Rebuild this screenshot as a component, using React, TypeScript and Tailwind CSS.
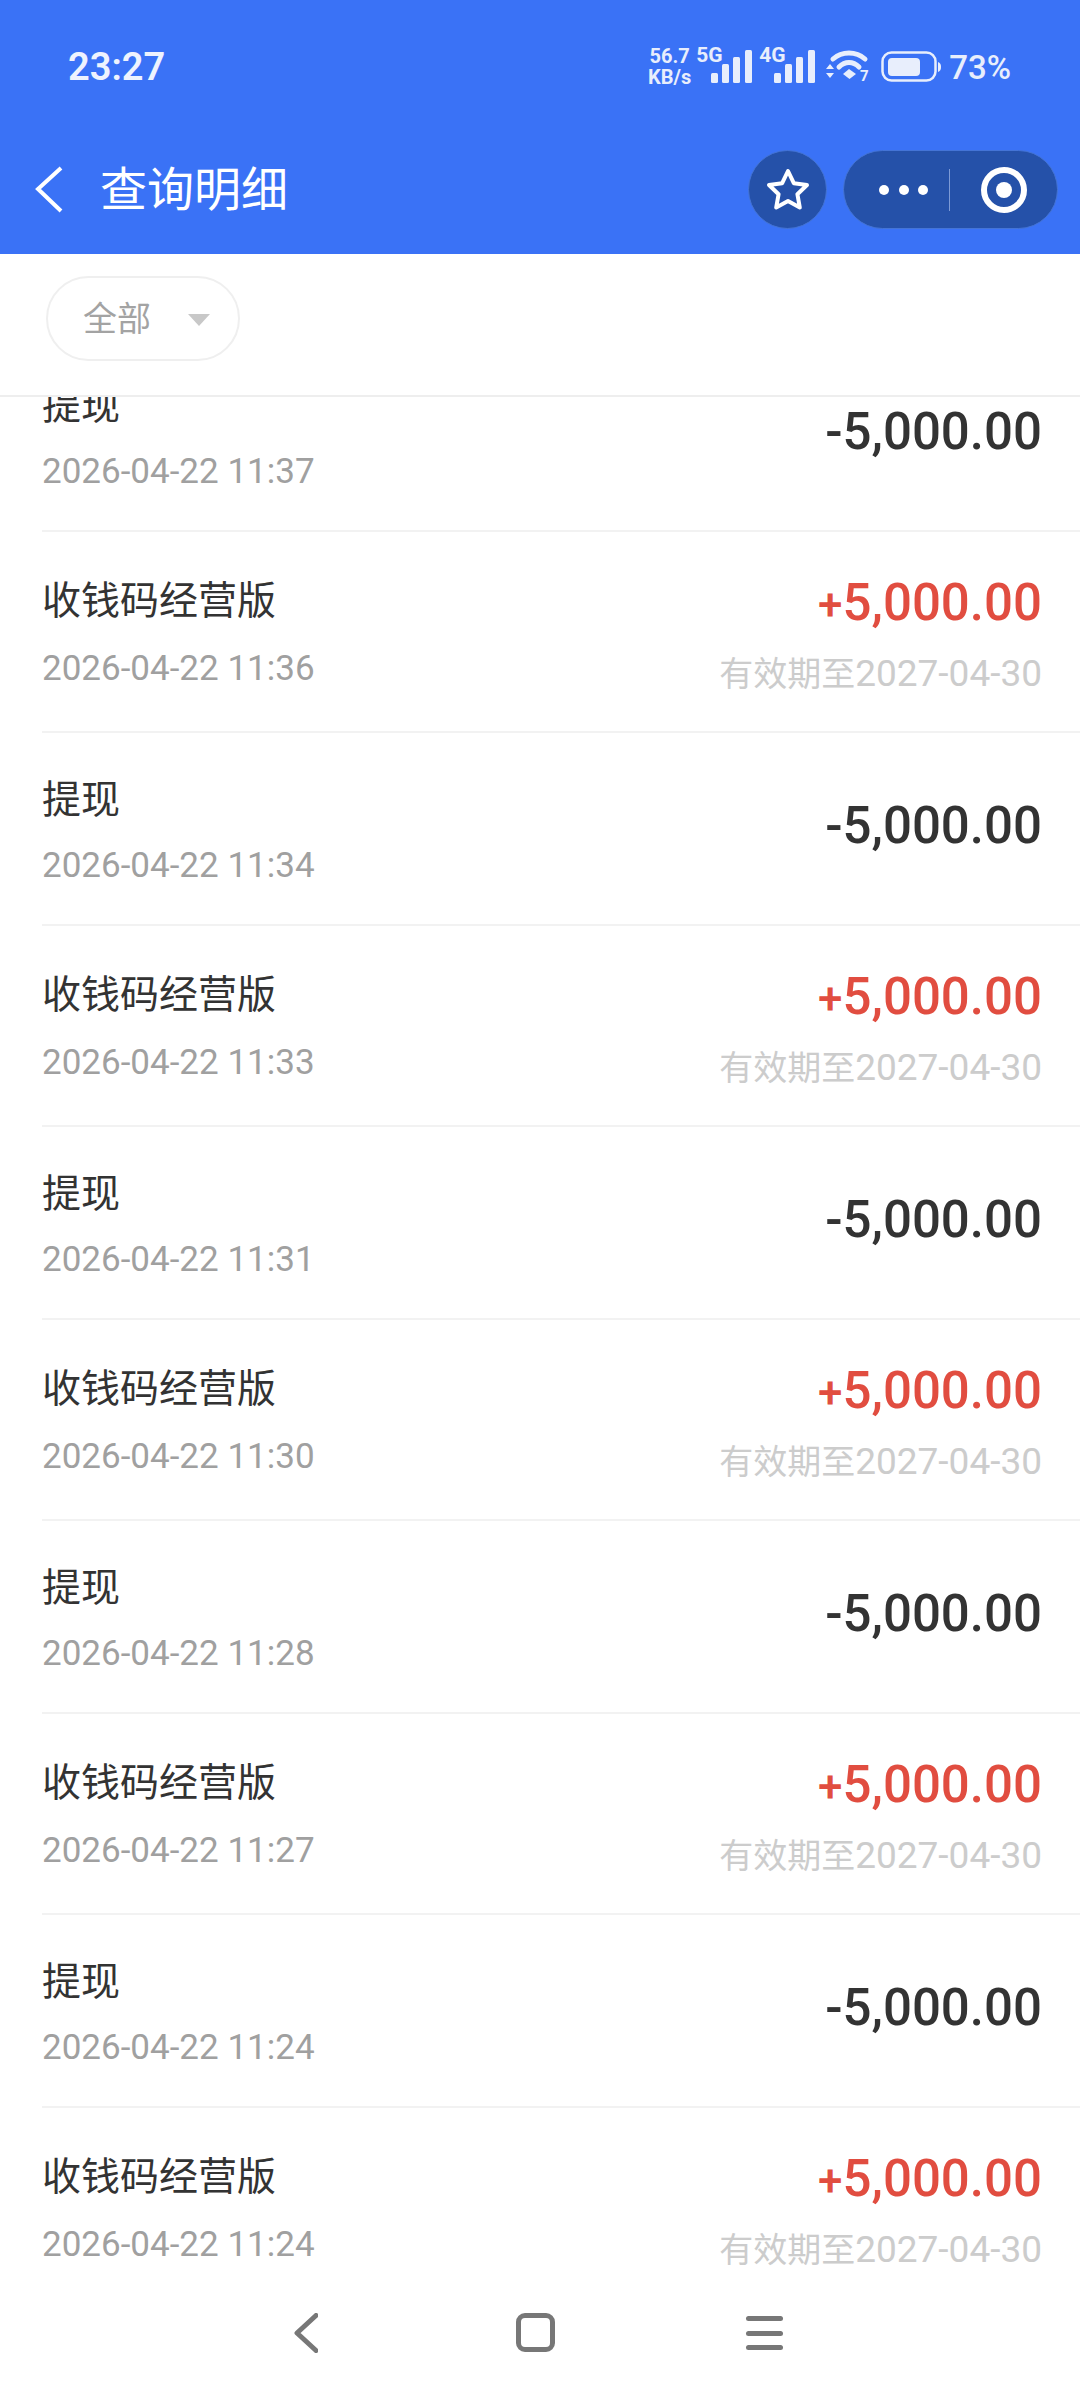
const FONT = "font-['Roboto','Noto_Sans_CJK_SC',sans-serif]";

type Row = { kind: "in" | "out"; time: string };

const rows: Row[] = [
  { kind: "out", time: "11:37" },
  { kind: "in", time: "11:36" },
  { kind: "out", time: "11:34" },
  { kind: "in", time: "11:33" },
  { kind: "out", time: "11:31" },
  { kind: "in", time: "11:30" },
  { kind: "out", time: "11:28" },
  { kind: "in", time: "11:27" },
  { kind: "out", time: "11:24" },
  { kind: "in", time: "11:24" },
];

function Signal({ label }: { label: string }) {
  return (
    <div className="relative h-[36px] w-[41px] shrink-0">
      <span className="absolute left-[-15px] top-[-3px] text-[21px] font-bold leading-[18px] text-[#e8eefc]">{label}</span>
      <svg width="41" height="36" viewBox="0 0 41 36" className="block" fill="#e8eefc">
        <rect x="0" y="24" width="7" height="10" rx="1.5" />
        <rect x="11" y="15" width="7" height="19" rx="1.5" />
        <rect x="22" y="8" width="7" height="26" rx="1.5" />
        <rect x="34" y="1" width="7" height="33" rx="1.5" />
      </svg>
    </div>
  );
}

function StatusBar() {
  return (
    <div className="flex h-[90px] items-center justify-between pl-[68px] pr-[69px] pt-[44px]">
      <span className="text-[38px] font-semibold leading-none text-[#eef3fe]">23:27</span>
      <div className="flex items-center text-[#e8eefc]">
        <div className="mr-[20px] flex flex-col items-center text-[20px] font-bold leading-[21px]">
          <span>56.7</span>
          <span>KB/s</span>
        </div>
        <Signal label="5G" />
        <div className="w-[22px]" />
        <Signal label="4G" />
        <svg width="48" height="38" viewBox="0 0 48 38" className="ml-[10px]" fill="none">
          <path d="M8 11C17 3 31 3 40 11" stroke="#e8eefc" strokeWidth="5" strokeLinecap="round" />
          <path d="M14 19C20 13 28 13 34 19" stroke="#e8eefc" strokeWidth="5" strokeLinecap="round" />
          <path d="M18 26L24 21L31 26L24.5 31Z" fill="#e8eefc" />
          <path d="M1 21L5 16L9 21ZM1 25L9 25L5 30Z" fill="#e8eefc" />
          <text x="35" y="33" fontSize="15" fontWeight="700" fill="#e8eefc">7</text>
        </svg>
        <svg width="60" height="32" viewBox="0 0 60 32" className="ml-[8px]" fill="none">
          <rect x="1.5" y="1.5" width="53" height="28" rx="9" stroke="#e8eefc" strokeWidth="2.5" />
          <rect x="7" y="7" width="32" height="18" rx="4" fill="#e8eefc" />
          <path d="M57 11C59 12 60 13 60 16C60 19 59 20 57 21Z" fill="#e8eefc" />
        </svg>
        <span className="ml-[8px] text-[33px] font-medium leading-none text-[#e8eefc]">73%</span>
      </div>
    </div>
  );
}

function TitleBar() {
  return (
    <div className="flex h-[164px] items-start justify-between pr-[22px] pt-[60px]">
      <div className="mt-[1px] flex h-[76px] items-center">
        <svg width="30" height="48" viewBox="0 0 30 48" className="ml-[34px]" fill="none">
          <path d="M27 3L4 24L27 46" stroke="#fff" strokeWidth="4" />
        </svg>
        <span className="ml-[36px] text-[47px] leading-none text-white">查询明细</span>
      </div>
      <div className="flex items-center gap-[16px]">
        <div className="flex h-[79px] w-[79px] items-center justify-center rounded-full border border-[#4474d6] bg-[#2551a9]">
          <svg width="46" height="46" viewBox="0 0 46 46" fill="none">
            <path
              d="M23 4L28.8 16.2L42 18L32.4 27.2L34.8 40.5L23 34.1L11.2 40.5L13.6 27.2L4 18L17.2 16.2Z"
              stroke="#fff"
              strokeWidth="4"
              strokeLinejoin="round"
            />
          </svg>
        </div>
        <div className="flex h-[79px] w-[215px] items-center rounded-full border border-[#4474d6] bg-[#2551a9]">
          <div className="ml-[35px] flex w-[49px] items-center justify-between">
            <span className="h-[10px] w-[10px] rounded-full bg-white" />
            <span className="h-[10px] w-[10px] rounded-full bg-white" />
            <span className="h-[10px] w-[10px] rounded-full bg-white" />
          </div>
          <div className="ml-[21px] h-[42px] w-px bg-[#7d9ad6]" />
          <div className="ml-[31px] flex h-[46px] w-[46px] items-center justify-center rounded-full border-[6px] border-white">
            <span className="h-[16px] w-[16px] rounded-full bg-white" />
          </div>
        </div>
      </div>
    </div>
  );
}

function Filter() {
  return (
    <div className="flex h-[143px] items-start border-b-2 border-[#eeeeee] pl-[46px] pt-[22px]">
      <div className="flex h-[85px] w-[194px] items-center rounded-full border-2 border-[#efefef]">
        <span className="ml-[35px] text-[34px] leading-none text-[#a3a3a3]">全部</span>
        <span className="ml-[37px] mt-[3px] h-0 w-0 border-x-[11px] border-t-[12px] border-x-transparent border-t-[#c8c8c8]" />
      </div>
    </div>
  );
}

function ListRow({ kind, time }: Row) {
  const isIn = kind === "in";
  return (
    <div
      className={`ml-[42px] flex justify-between border-b-2 border-[#f2f2f2] pr-[38px] ${isIn ? "h-[201px] pt-[45px]" : "h-[193px] pt-[43px]"}`}
    >
      <div className="flex flex-col">
        <span className="text-[39px] leading-[48px] text-[#333333]">{isIn ? "收钱码经营版" : "提现"}</span>
        <span className={`text-[35px] leading-[44px] text-[#a0a0a0] ${isIn ? "mt-[22px]" : "mt-[20px]"}`}>2026-04-22 {time}</span>
      </div>
      {isIn ? (
        <div className="flex flex-col items-end">
          <span className="mt-[-4px] font-medium leading-[60px] text-[#e14d40]">
            <span className="text-[44px]">+</span>
            <span className="text-[51px]">5,000.00</span>
          </span>
          <span className="mt-[7px] leading-[44px] text-[#cccccc]">
            <span className="text-[34px]">有效期至</span>
            <span className="text-[37px]">2027-04-30</span>
          </span>
        </div>
      ) : (
        <span className="mt-[20px] text-[51px] font-medium leading-[60px] text-[#333333]">-5,000.00</span>
      )}
    </div>
  );
}

function NavBar() {
  return (
    <div className="flex h-[120px] shrink-0 items-start bg-white pt-[33px]">
      <svg width="24" height="40" viewBox="0 0 24 40" className="ml-[294px]" fill="none">
        <path d="M22 2.5L3 20L22 37.5" stroke="#777777" strokeWidth="5" strokeLinecap="round" strokeLinejoin="round" />
      </svg>
      <div className="ml-[198px] h-[39px] w-[39px] rounded-[9px] border-[5px] border-[#777777]" />
      <div className="ml-[191px] mt-[3px] flex h-[34px] w-[37px] flex-col justify-between">
        <span className="h-[5px] rounded-full bg-[#777777]" />
        <span className="h-[5px] rounded-full bg-[#777777]" />
        <span className="h-[5px] rounded-full bg-[#777777]" />
      </div>
    </div>
  );
}

export default function App() {
  return (
    <div className={`flex h-[2400px] w-[1080px] flex-col overflow-hidden bg-white ${FONT}`}>
      <div className="shrink-0 bg-[#3a72f6]">
        <StatusBar />
        <TitleBar />
      </div>
      <Filter />
      <div className="min-h-0 flex-1 overflow-hidden">
        <div className="mt-[-58px]">
          {rows.map((r, i) => (
            <ListRow key={i} {...r} />
          ))}
        </div>
      </div>
      <NavBar />
    </div>
  );
}
